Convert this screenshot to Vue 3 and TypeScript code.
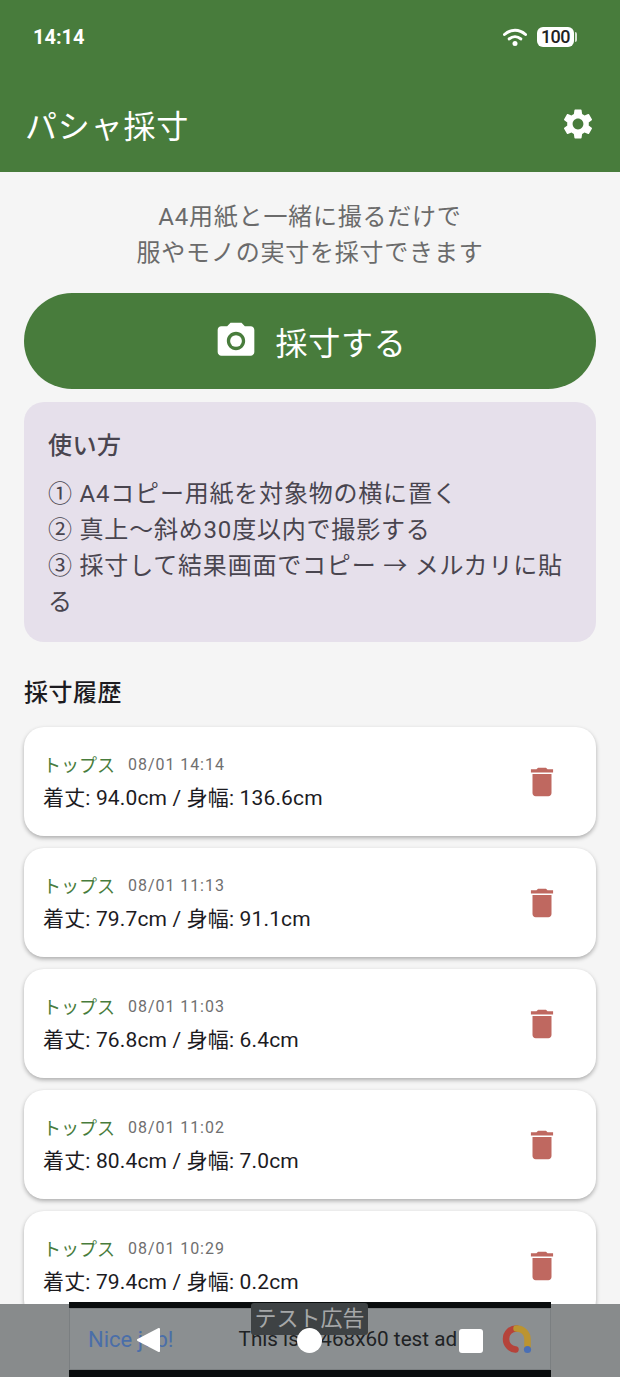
<template>
  <div class="screen">
    <header class="appbar">
      <div class="status">
        <span class="clock">14:14</span>
        <div class="status-icons">
          <svg class="wifi" viewBox="0 0 24 18" width="24" height="18">
            <path d="M1.5 6.5C7.8 0.8 16.2 0.8 22.5 6.5" fill="none" stroke="#fff" stroke-width="3" stroke-linecap="round" />
            <path d="M6.2 10.9C9.6 7.9 14.4 7.9 17.8 10.9" fill="none" stroke="#fff" stroke-width="3" stroke-linecap="round" />
            <circle cx="12" cy="15.4" r="2.5" fill="#fff" />
          </svg>
          <span class="battery">100</span>
          <span class="battery-tip" />
        </div>
      </div>
      <div class="titlebar">
        <h1>パシャ採寸</h1>
        <svg class="gear" viewBox="0 0 24 24" width="36" height="36">
          <path fill="#fff" d="M19.14 12.94c.04-.3.06-.61.06-.94 0-.32-.02-.64-.07-.94l2.03-1.58a.49.49 0 0 0 .12-.61l-1.92-3.32a.488.488 0 0 0-.59-.22l-2.39.96c-.5-.38-1.03-.7-1.62-.94l-.36-2.54a.484.484 0 0 0-.48-.41h-3.84c-.24 0-.43.17-.47.41l-.36 2.54c-.59.24-1.13.57-1.62.94l-2.39-.96c-.22-.08-.47 0-.59.22L2.74 8.87c-.12.21-.08.47.12.61l2.03 1.58c-.05.3-.09.63-.09.94s.02.64.07.94l-2.03 1.58a.49.49 0 0 0-.12.61l1.92 3.32c.12.22.37.29.59.22l2.39-.96c.5.38 1.03.7 1.62.94l.36 2.54c.05.24.24.41.48.41h3.84c.24 0 .44-.17.47-.41l.36-2.54c.59-.24 1.13-.56 1.62-.94l2.39.96c.22.08.47 0 .59-.22l1.92-3.32c.12-.22.07-.47-.12-.61l-2.01-1.58zM12 15.6c-1.98 0-3.6-1.62-3.6-3.6s1.62-3.6 3.6-3.6 3.6 1.62 3.6 3.6-1.62 3.6-3.6 3.6z" />
        </svg>
      </div>
    </header>

    <main class="body">
      <p class="intro">A4用紙と一緒に撮るだけで<br />服やモノの実寸を採寸できます</p>

      <button class="shoot">
        <svg viewBox="0 0 24 24" width="44" height="44">
          <circle cx="12" cy="12" r="3.2" fill="#fff" />
          <path fill="#fff" d="M9 2 7.17 4H4c-1.1 0-2 .9-2 2v12c0 1.1.9 2 2 2h16c1.1 0 2-.9 2-2V6c0-1.1-.9-2-2-2h-3.17L15 2H9zm3 15c-2.76 0-5-2.24-5-5s2.24-5 5-5 5 2.24 5 5-2.24 5-5 5z" />
        </svg>
        <span>採寸する</span>
      </button>

      <section class="howto">
        <h2>使い方</h2>
        <p v-for="step in steps" :key="step">{{ step }}</p>
      </section>

      <h2 class="history-title">採寸履歴</h2>

      <div class="history">
        <article v-for="item in history" :key="item.date" class="card">
          <div class="card-text">
            <div class="meta">
              <span class="kind">トップス</span>
              <span class="date">{{ item.date }}</span>
            </div>
            <div class="size">{{ item.size }}</div>
          </div>
          <svg class="trash" viewBox="0 0 24 24" width="38" height="38">
            <path fill="#bf6860" d="M6 19c0 1.1.9 2 2 2h8c1.1 0 2-.9 2-2V7H6v12zM19 4h-3.5l-1-1h-5l-1 1H5v2h14V4z" />
          </svg>
        </article>
      </div>
    </main>

    <div class="scrim" />

    <div class="ad">
      <div class="ad-inner">
        <span class="ad-nice">Nice job!</span>
        <span class="ad-text">This is a 468x60 test ad</span>
        <svg class="ad-logo" viewBox="0 0 32 32" width="32" height="32">
          <path d="M14.5 26.5C9 26 5 21.5 5 16 5 10 9.5 5.5 15.5 5.5" fill="none" stroke="#b5433a" stroke-width="6.5" stroke-linecap="round" />
          <path d="M15.5 5.5C21.5 5.5 26.5 10 26.5 16V25" fill="none" stroke="#bb9430" stroke-width="6.5" stroke-linecap="round" />
          <circle cx="26.5" cy="26.5" r="3.6" fill="#4a6fb5" />
        </svg>
      </div>
      <span class="ad-label">テスト広告</span>
    </div>

    <nav class="navbar">
      <svg viewBox="0 0 26 26" width="26" height="26">
        <path fill="#fff" stroke="#fff" stroke-width="2" stroke-linejoin="round" d="M24 2 3 13l21 11z" />
      </svg>
      <span class="nav-home" />
      <span class="nav-recent" />
    </nav>
  </div>
</template>

<script setup lang="ts">
const steps: string[] = [
  "① A4コピー用紙を対象物の横に置く",
  "② 真上〜斜め30度以内で撮影する",
  "③ 採寸して結果画面でコピー → メルカリに貼る",
];

const history = [
  { date: "08/01 14:14", size: "着丈: 94.0cm / 身幅: 136.6cm" },
  { date: "08/01 11:13", size: "着丈: 79.7cm / 身幅: 91.1cm" },
  { date: "08/01 11:03", size: "着丈: 76.8cm / 身幅: 6.4cm" },
  { date: "08/01 11:02", size: "着丈: 80.4cm / 身幅: 7.0cm" },
  { date: "08/01 10:29", size: "着丈: 79.4cm / 身幅: 0.2cm" },
];
</script>

<style>
html,
body {
  margin: 0;
  background: #f5f5f5;
}
</style>

<style scoped>
.screen {
  position: relative;
  width: 620px;
  height: 1377px;
  overflow: hidden;
  background: #f5f5f5;
  font-family: Roboto, "Noto Sans CJK JP", sans-serif;
}
.appbar {
  height: 172px;
  box-sizing: border-box;
  background: #487c3c;
  color: #fff;
}
.status {
  height: 74px;
  padding: 0 43px 0 33px;
  display: flex;
  align-items: center;
  justify-content: space-between;
}
.clock {
  font-size: 20px;
  font-weight: 700;
}
.status-icons {
  display: flex;
  align-items: center;
}
.wifi {
  margin-right: 10px;
}
.battery {
  width: 37px;
  height: 20px;
  border-radius: 6px;
  background: #fff;
  color: #222;
  font-size: 18px;
  font-weight: 500;
  line-height: 20px;
  text-align: center;
  letter-spacing: -0.5px;
}
.battery-tip {
  width: 2px;
  height: 10px;
  margin-left: 1px;
  border-radius: 0 2px 2px 0;
  background: #d7e2d4;
}
.titlebar {
  height: 98px;
  padding: 0 24px 0 25px;
  display: flex;
  align-items: center;
  justify-content: space-between;
}
.titlebar h1 {
  margin: 2px 0 0;
  font-size: 32px;
  font-weight: 400;
  letter-spacing: 0.8px;
}
.gear {
  margin-top: 2px;
}
.body {
  padding: 27px 24px 0;
}
.intro {
  margin: 0;
  font-size: 24px;
  line-height: 36px;
  letter-spacing: 0.78px;
  color: #6b6b6b;
  text-align: center;
}
.shoot {
  width: 100%;
  height: 96px;
  margin-top: 22px;
  border: 0;
  border-radius: 48px;
  background: #487c3c;
  color: #fff;
  font-family: inherit;
  font-size: 32px;
  letter-spacing: 0.7px;
  display: flex;
  align-items: center;
  justify-content: center;
  gap: 18px;
}
.howto {
  margin-top: 13px;
  padding: 26px 24px 22px;
  border-radius: 20px;
  background: #e6e0eb;
  color: #49454f;
}
.howto h2 {
  margin: 0 0 12px;
  font-size: 24px;
  line-height: 36px;
  font-weight: 500;
  letter-spacing: 0.5px;
}
.howto p {
  margin: 0;
  font-size: 24px;
  line-height: 36px;
  letter-spacing: 0.8px;
}
.history-title {
  margin: 34px 0 17px;
  font-size: 24px;
  line-height: 34px;
  font-weight: 500;
  letter-spacing: 0.5px;
  color: #1c1b1f;
}
.history {
  display: flex;
  flex-direction: column;
  gap: 12px;
}
.card {
  height: 109px;
  flex: none;
  box-sizing: border-box;
  padding: 0 35px 0 19px;
  border-radius: 20px;
  background: #fff;
  box-shadow: 0 2px 4px rgba(0, 0, 0, 0.3);
  display: flex;
  align-items: center;
  justify-content: space-between;
}
.meta {
  display: flex;
  align-items: center;
  gap: 13px;
  height: 30px;
}
.kind {
  font-size: 18px;
  color: #487c3c;
}
.date {
  padding-top: 1px;
  font-size: 16px;
  letter-spacing: 0.95px;
  color: #6f6f6f;
}
.size {
  margin-top: 3px;
  font-size: 21px;
  line-height: 32px;
  letter-spacing: 0.15px;
  color: #1c1b1f;
}
.trash {
  margin-top: 1px;
}
.scrim {
  position: absolute;
  left: 0;
  right: 0;
  top: 1304px;
  bottom: 0;
  background: #888b8c;
}
.ad {
  position: absolute;
  left: 69px;
  right: 69px;
  top: 1302px;
  bottom: 0;
  background: #0a0d0e;
}
.ad-inner {
  position: absolute;
  left: 0;
  right: 0;
  top: 6px;
  height: 62px;
  padding: 0 18px 0 19px;
  background: #8b8f91;
  box-shadow: inset 0 0 0 1px #7b7f81;
  display: flex;
  align-items: center;
  box-sizing: border-box;
}
.ad-nice {
  font-size: 22px;
  color: #4a6ea9;
}
.ad-text {
  margin-left: 65px;
  font-size: 20.7px;
  color: #202224;
  white-space: nowrap;
}
.ad-logo {
  margin-left: auto;
}
.ad-label {
  position: absolute;
  left: 182px;
  top: 1px;
  width: 117px;
  height: 32px;
  border-radius: 3px;
  background: #3e4244;
  color: #a5a7a8;
  font-size: 22px;
  line-height: 32px;
  text-align: center;
  white-space: nowrap;
}
.navbar svg {
  position: absolute;
  left: 135px;
  top: 1327px;
}
.nav-home {
  position: absolute;
  left: 297px;
  top: 1328px;
  width: 25px;
  height: 25px;
  border-radius: 50%;
  background: #fff;
}
.nav-recent {
  position: absolute;
  left: 459px;
  top: 1329px;
  width: 24px;
  height: 24px;
  border-radius: 3px;
  background: #fff;
}
</style>
